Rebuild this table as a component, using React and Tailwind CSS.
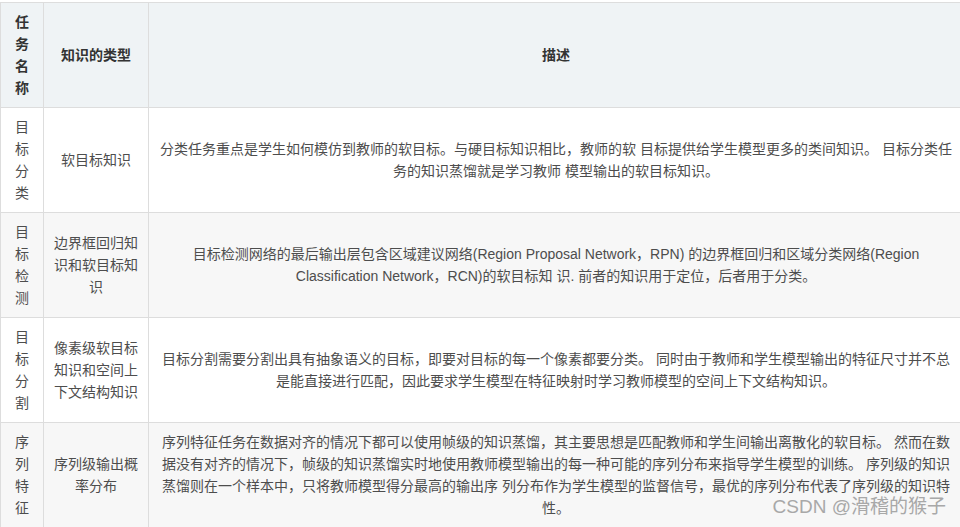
const rows = [
    {
        task: "目标分类",
        kind: "软目标知识",
        desc: [
            "分类任务重点是学生如何模仿到教师的软目标。与硬目标知识相比，教师的软 目标提供给学生模型更多的类间知识。 目标分类任",
            "务的知识蒸馏就是学习教师 模型输出的软目标知识。",
        ],
    },
    {
        task: "目标检测",
        kind: "边界框回归知识和软目标知识",
        desc: [
            "目标检测网络的最后输出层包含区域建议网络(Region Proposal Network，RPN) 的边界框回归和区域分类网络(Region",
            "Classification Network，RCN)的软目标知 识. 前者的知识用于定位，后者用于分类。",
        ],
    },
    {
        task: "目标分割",
        kind: "像素级软目标知识和空间上下文结构知识",
        desc: [
            "目标分割需要分割出具有抽象语义的目标，即要对目标的每一个像素都要分类。 同时由于教师和学生模型输出的特征尺寸并不总",
            "是能直接进行匹配，因此要求学生模型在特征映射时学习教师模型的空间上下文结构知识。",
        ],
    },
    {
        task: "序列特征",
        kind: "序列级输出概率分布",
        desc: [
            "序列特征任务在数据对齐的情况下都可以使用帧级的知识蒸馏，其主要思想是匹配教师和学生间输出离散化的软目标。 然而在数",
            "据没有对齐的情况下，帧级的知识蒸馏实时地使用教师模型输出的每一种可能的序列分布来指导学生模型的训练。 序列级的知识",
            "蒸馏则在一个样本中，只将教师模型得分最高的输出序 列分布作为学生模型的监督信号，最优的序列分布代表了序列级的知识特",
            "性。",
        ],
    },
];

export default function App() {
    return (
        <div className="relative w-[960px] h-[527px] overflow-hidden bg-white pt-[2px] font-['Liberation_Sans','Noto_Sans_CJK_SC',sans-serif] text-[14px] leading-[22px] text-[#4d4d4d]">
            <table className="w-[963px] table-fixed border-collapse">
                <colgroup>
                    <col className="w-[43px]" />
                    <col className="w-[105px]" />
                    <col className="w-[815px]" />
                </colgroup>
                <thead>
                    <tr className="bg-[#eff3f5] text-[#333]">
                        <th className="border border-[#ddd] p-2 font-bold text-center align-middle">任务名称</th>
                        <th className="border border-[#ddd] p-2 font-bold text-center align-middle">知识的类型</th>
                        <th className="border border-[#ddd] p-2 font-bold text-center align-middle">描述</th>
                    </tr>
                </thead>
                <tbody>
                    {rows.map((row, i) => (
                        <tr key={row.task} className={i % 2 === 1 ? "bg-[#f7f7f7]" : "bg-white"}>
                            <td className="border border-[#ddd] p-2 text-center align-middle">{row.task}</td>
                            <td className="border border-[#ddd] p-2 text-center align-middle">{row.kind}</td>
                            <td className="border border-[#ddd] p-2 text-center align-middle whitespace-nowrap">
                                {row.desc.map((line, j) => (
                                    <div key={j}>{line}</div>
                                ))}
                            </td>
                        </tr>
                    ))}
                </tbody>
            </table>
            {/* csdn watermark */}
            <div className="absolute right-[14px] bottom-[8px] text-[19px] leading-[24px] text-[#a8a8a8]">
                CSDN @滑稽的猴子
            </div>
        </div>
    );
}
